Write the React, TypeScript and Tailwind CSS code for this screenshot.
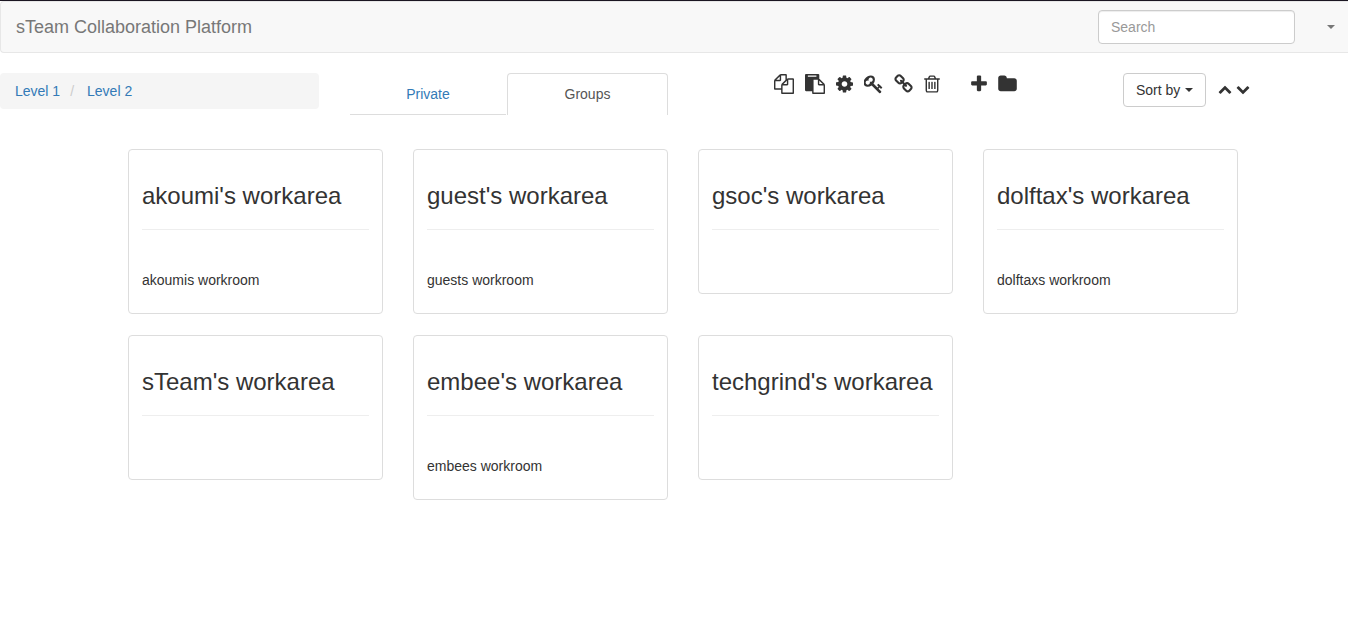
import React from "react";

type Glyph = { label: string; viewBox: string; size: string; d: string };

const editGlyphs: Glyph[] = [
  {
    label: "Copy",
    viewBox: "0 0 1792 1792",
    size: "h-5 w-5",
    d: "M1696 384q40 0 68 28t28 68v1216q0 40-28 68t-68 28h-960q-40 0-68-28t-28-68v-288h-544q-40 0-68-28t-28-68v-672q0-40 20-88t48-76l408-408q28-28 76-48t88-20h416q40 0 68 28t28 68v328q68-40 128-40h416zm-544 213l-299 299h299v-299zm-640-384l-299 299h299v-299zm196 647l316-316v-416h-384v416q0 40-28 68t-68 28h-416v640h512v-256q0-40 20-88t48-76zm956 804v-1152h-384v416q0 40-28 68t-68 28h-416v640h896z",
  },
  {
    label: "Paste",
    viewBox: "0 0 1792 1792",
    size: "h-5 w-5",
    d: "M768 1664h896v-640h-416q-40 0-68-28t-28-68v-416h-384v1152zm256-1440v-64q0-13-9.5-22.5t-22.5-9.5h-704q-13 0-22.5 9.5t-9.5 22.5v64q0 13 9.5 22.5t22.5 9.5h704q13 0 22.5-9.5t9.5-22.5zm256 672h299l-299-299v299zm512 128v672q0 40-28 68t-68 28h-960q-40 0-68-28t-28-68v-160h-544q-40 0-68-28t-28-68v-1344q0-40 28-68t68-28h1088q40 0 68 28t28 68v328q21 13 36 28l408 408q28 28 48 76t20 88z",
  },
  {
    label: "Settings",
    viewBox: "128 0 1536 1792",
    size: "h-5 w-[17px]",
    d: "M1152 896q0-106-75-181t-181-75-181 75-75 181 75 181 181 75 181-75 75-181zm512-109v222q0 12-8 23t-20 13l-185 28q-19 54-39 91 35 50 107 138 10 12 10 25t-9 23q-27 37-99 108t-94 71q-12 0-26-9l-138-108q-44 23-91 38-16 136-29 186-7 28-36 28h-222q-14 0-24.5-8.5t-11.5-21.5l-28-184q-49-16-90-37l-141 107q-10 9-25 9-14 0-25-11-126-114-165-168-7-10-7-23 0-12 8-23 15-21 51-66.5t54-70.5q-27-50-41-99l-183-27q-13-2-21-12.5t-8-23.5v-222q0-12 8-23t19-13l186-28q14-46 39-92-40-57-107-138-10-12-10-24 0-10 9-23 26-36 98.5-107.5t94.5-71.5q13 0 26 10l138 107q44-23 91-38 16-136 29-186 7-28 36-28h222q14 0 24.5 8.5t11.5 21.5l28 184q49 16 90 37l142-107q9-9 24-9 13 0 25 10 129 119 165 170 7 8 7 22 0 12-8 23-15 21-51 66.5t-54 70.5q26 50 41 98l183 28q13 2 21 12.5t8 23.5z",
  },
  {
    label: "Permissions",
    viewBox: "64 0 1664 1792",
    size: "h-5 w-[19px]",
    d: "M832 512q0-80-56-136t-136-56-136 56-56 136q0 42 19 83-41-19-83-19-80 0-136 56t-56 136 56 136 136 56 136-56 56-136q0-42-19-83 41 19 83 19 80 0 136-56t56-136zm851 704q0 17-49 66t-66 49q-9 0-28.5-16t-36.5-33-38.5-40-24.5-26l-96 96 220 220q28 28 28 68 0 42-39 81t-81 39q-40 0-68-28l-671-671q-176 131-365 131-163 0-265.5-102.5t-102.5-265.5q0-160 95-313t248-248 313-95q163 0 265.5 102.5t102.5 265.5q0 189-131 365l355 355 96-96q-3-3-26-24.5t-40-38.5-33-36.5-16-28.5q0-17 49-66t66-49q13 0 23 10 6 6 46 44.5t82 79.5 86.5 86 73 78 28.5 41z",
  },
  {
    label: "Link",
    viewBox: "64 0 1664 1792",
    size: "h-5 w-[19px]",
    d: "M1520 1216q0-40-28-68l-208-208q-28-28-68-28-42 0-72 32 3 3 19 18.5t21.5 21.5 15 19 13 25.5 3.5 27.5q0 40-28 68t-68 28q-15 0-27.5-3.5t-25.5-13-19-15-21.5-21.5-18.5-19q-33 31-33 73 0 40 28 68l206 207q27 27 68 27 40 0 68-26l147-146q28-28 28-67zm-703-705q0-40-28-68l-206-207q-28-28-68-28-39 0-68 27l-147 146q-28 28-28 67 0 40 28 68l208 208q27 27 68 27 42 0 72-31-3-3-19-18.5t-21.5-21.5-15-19-13-25.5-3.5-27.5q0-40 28-68t68-28q15 0 27.5 3.5t25.5 13 19 15 21.5 21.5 18.5 19q33-31 33-73zm895 705q0 120-85 203l-147 146q-83 83-203 83-121 0-204-85l-206-207q-83-83-83-203 0-123 88-209l-88-88q-86 88-208 88-120 0-204-84l-208-208q-84-84-84-204t85-203l147-146q83-83 203-83 121 0 204 85l206 207q83 83 83 203 0 123-88 209l88 88q86-88 208-88 120 0 204 84l208 208q84 84 84 204z",
  },
  {
    label: "Delete",
    viewBox: "192 0 1408 1792",
    size: "h-5 w-4",
    d: "M704 736v576q0 14-9 23t-23 9h-64q-14 0-23-9t-9-23v-576q0-14 9-23t23-9h64q14 0 23 9t9 23zm256 0v576q0 14-9 23t-23 9h-64q-14 0-23-9t-9-23v-576q0-14 9-23t23-9h64q14 0 23 9t9 23zm256 0v576q0 14-9 23t-23 9h-64q-14 0-23-9t-9-23v-576q0-14 9-23t23-9h64q14 0 23 9t9 23zm128 724v-948h-896v948q0 22 7 40.5t14.5 27 10.5 8.5h832q3 0 10.5-8.5t14.5-27 7-40.5zm-672-1076h448l-48-117q-7-9-17-11h-317q-10 2-17 11zm928 32v64q0 14-9 23t-23 9h-96v948q0 83-47 143.5t-113 60.5h-832q-66 0-113-58.5t-47-141.5v-952h-96q-14 0-23-9t-9-23v-64q0-14 9-23t23-9h309l70-167q15-37 54-63t79-26h320q40 0 79 26t54 63l70 167h309q14 0 23 9t9 23z",
  },
];

const createGlyphs: Glyph[] = [
  {
    label: "Add",
    viewBox: "192 0 1408 1792",
    size: "h-5 w-4",
    d: "M1600 736v192q0 40-28 68t-68 28h-416v416q0 40-28 68t-68 28h-192q-40 0-68-28t-28-68v-416h-416q-40 0-68-28t-28-68v-192q0-40 28-68t68-28h416v-416q0-40 28-68t68-28h192q40 0 68 28t28 68v416h416q40 0 68 28t28 68z",
  },
  {
    label: "New folder",
    viewBox: "64 0 1664 1792",
    size: "h-5 w-[19px]",
    d: "M1728 608v704q0 92-66 158t-158 66h-1216q-92 0-158-66t-66-158v-960q0-92 66-158t158-66h320q92 0 158 66t66 158v32h672q92 0 158 66t66 158z",
  },
];

const sortGlyphs: Glyph[] = [
  {
    label: "Ascending",
    viewBox: "0 0 1792 1792",
    size: "h-3.5 w-3.5",
    d: "M1683 1331l-166 165q-19 19-45 19t-45-19l-531-531-531 531q-19 19-45 19t-45-19l-166-165q-19-19-19-45.5t19-45.5l742-741q19-19 45-19t45 19l742 741q19 19 19 45.5t-19 45.5z",
  },
  {
    label: "Descending",
    viewBox: "0 0 1792 1792",
    size: "h-3.5 w-3.5",
    d: "M1683 808l-742 741q-19 19-45 19t-45-19l-742-741q-19-19-19-45.5t19-45.5l166-165q19-19 45-19t45 19l531 531 531-531q19-19 45-19t45 19l166 165q19 19 19 45.5t-19 45.5z",
  },
];

const workareas = [
  { title: "akoumi's workarea", description: "akoumis workroom" },
  { title: "guest's workarea", description: "guests workroom" },
  { title: "gsoc's workarea", description: "" },
  { title: "dolftax's workarea", description: "dolftaxs workroom" },
  { title: "sTeam's workarea", description: "" },
  { title: "embee's workarea", description: "embees workroom" },
  { title: "techgrind's workarea", description: "" },
];

function GlyphButtons({ items, className }: { items: Glyph[]; className: string }) {
  return (
    <div className={className}>
      {items.map((g) => (
        <button key={g.label} type="button" aria-label={g.label} className="block">
          <svg viewBox={g.viewBox} className={`block ${g.size}`} fill="currentColor" aria-hidden="true">
            <path d={g.d} />
          </svg>
        </button>
      ))}
    </div>
  );
}

function Caret() {
  return (
    <svg viewBox="0 0 8 4" className="h-1 w-2" fill="currentColor" aria-hidden="true">
      <path d="M0 0h8L4 4z" />
    </svg>
  );
}

function Navbar() {
  return (
    <nav className="flex h-[52px] items-center rounded-l border border-r-0 border-[#e7e7e7] bg-[#f8f8f8] pr-[13px] pl-[15px]">
      <a href="#" className="text-lg leading-5 text-[#777]">
        sTeam Collaboration Platform
      </a>
      <input
        type="search"
        aria-label="Search"
        placeholder="Search"
        className="ml-auto h-[34px] w-[197px] rounded border border-[#ccc] bg-white px-3 text-[#555] shadow-[inset_0_1px_1px_rgba(0,0,0,0.075)] outline-none placeholder:text-[#999]"
      />
      <button type="button" aria-label="Account menu" className="ml-8 py-3 text-[#777]">
        <Caret />
      </button>
    </nav>
  );
}

function Toolbar() {
  return (
    <div className="mt-5 grid grid-cols-[319fr_318fr_393fr_225fr] items-start gap-x-[31px]">
      <ol className="flex rounded bg-[#f5f5f5] px-[15px] py-2">
        <li>
          <a href="#" className="text-[#337ab7]">Level 1</a>
        </li>
        <li>
          <span className="pr-[13px] pl-2.5 text-[#ccc]">/</span>
          <a href="#" className="text-[#337ab7]">Level 2</a>
        </li>
      </ol>

      <div role="tablist" className="grid grid-cols-[157fr_161fr] text-center">
        <button
          type="button"
          role="tab"
          aria-selected="false"
          className="mr-px border-b border-[#ddd] pt-[11px] pb-2.5 text-[#337ab7]"
        >
          Private
        </button>
        <button
          type="button"
          role="tab"
          aria-selected="true"
          className="rounded-t border border-b-0 border-[#ddd] pt-2.5 pb-[11px] text-[#555]"
        >
          Groups
        </button>
      </div>

      <div className="flex justify-center gap-[31px] pt-px">
        <GlyphButtons items={editGlyphs} className="flex gap-[11px]" />
        <GlyphButtons items={createGlyphs} className="flex gap-[11px]" />
      </div>

      <div className="flex items-start gap-3">
        <button
          type="button"
          className="flex items-center gap-[5px] rounded border border-[#ccc] bg-white px-3 py-1.5"
        >
          Sort by
          <Caret />
        </button>
        <GlyphButtons items={sortGlyphs} className="flex gap-1 pt-[9px]" />
      </div>
    </div>
  );
}

function WorkareaCard({ title, description }: { title: string; description: string }) {
  return (
    <article className="rounded border border-[#ddd] bg-white px-[13px] pt-[33px] pb-[23px]">
      <h3 className="text-2xl leading-[26px]">{title}</h3>
      <hr className="mt-5 mb-10 border-[#eee]" />
      {description && <p>{description}</p>}
    </article>
  );
}

export default function App() {
  return (
    <div className="min-h-screen border-t border-[#1b1622] bg-white font-['Liberation_Sans',Arial,sans-serif] text-sm leading-5 text-[#333]">
      <Navbar />
      <Toolbar />
      <main className="mt-[34px] grid grid-cols-4 items-start gap-x-[30px] gap-y-[21px] pr-[110px] pl-32">
        {workareas.map((w) => (
          <WorkareaCard key={w.title} title={w.title} description={w.description} />
        ))}
      </main>
    </div>
  );
}
